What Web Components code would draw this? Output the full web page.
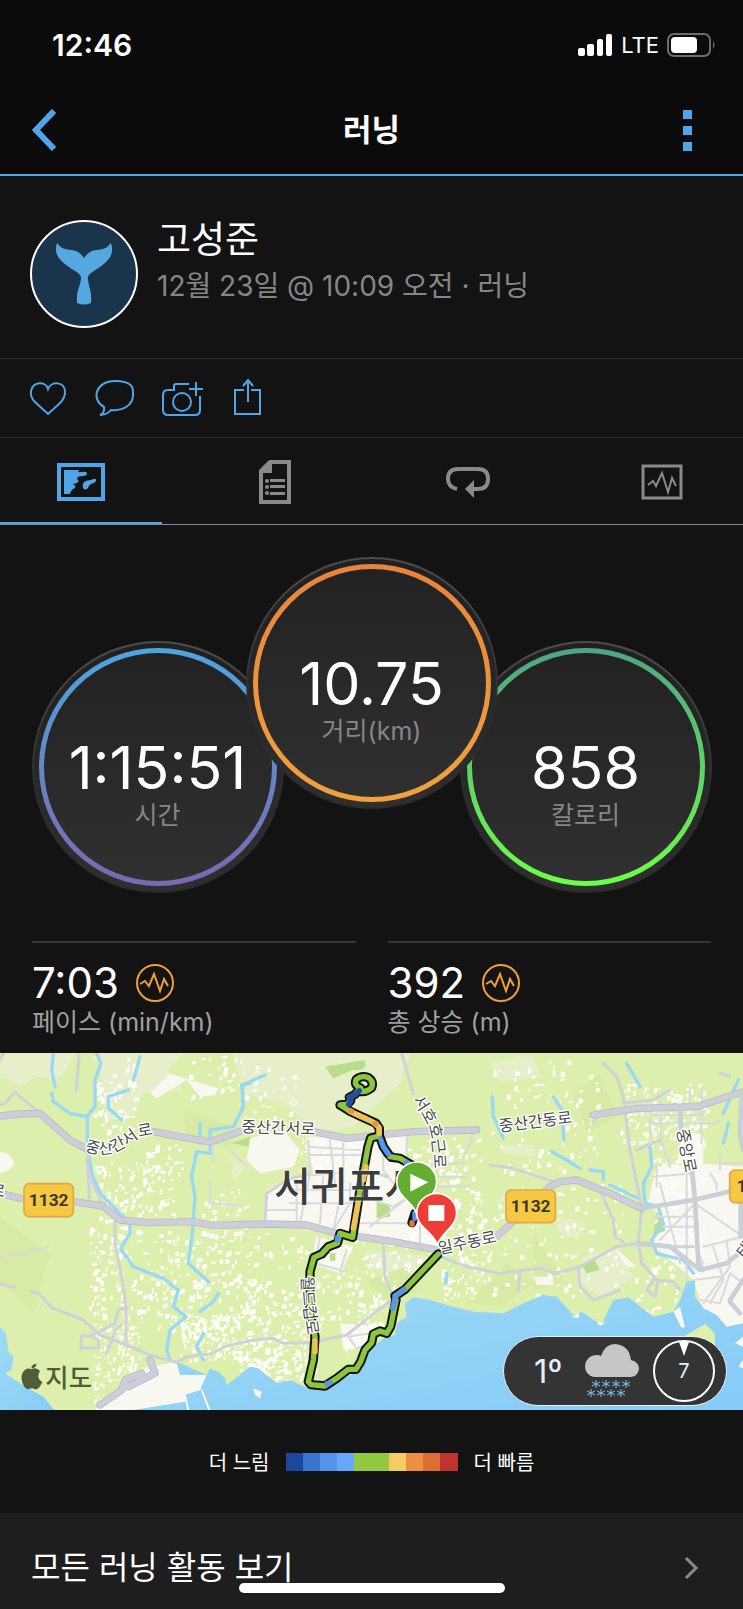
<!DOCTYPE html>
<html lang="ko">
<head>
<meta charset="utf-8">
<meta name="viewport" content="width=device-width, initial-scale=1">
<title>러닝</title>
<style>
    body {
        margin: 0;
        background: #131313;
        color: #fff;
        font-family: Inter, "Noto Sans CJK KR", sans-serif;
        --accent: #4ea5e8;
        --muted: #868686;
        --line: #2e2c2f;
    }
</style>
</head>
<body>
<activity-page></activity-page>

<script>
class StatusBar extends HTMLElement {
    connectedCallback() {
        this.attachShadow({ mode: 'open' });
        this.shadowRoot.innerHTML = `
            <style>
                :host {
                    display: flex;
                    align-items: center;
                    justify-content: space-between;
                    height: 90px;
                    padding: 0 27px 0 52px;
                    background: #0b0b0b;
                }
                time { font-size: 30px; font-weight: 600; }
                .right { display: flex; align-items: center; gap: 8px; font-size: 22px; }
                svg { display: block; }
            </style>
            <time>12:46</time>
            <div class="right">
                <svg width="35" height="22" fill="#fff">
                    <rect y="14" width="7" height="8" rx="2"/><rect x="9" y="10" width="7" height="12" rx="2"/>
                    <rect x="19" y="5" width="6" height="17" rx="2"/><rect x="28" width="6" height="22" rx="2"/>
                </svg>
                <span>LTE</span>
                <svg width="49" height="24">
                    <rect x="1" y="1" width="42" height="22" rx="6" fill="none" stroke="#6d6d6d" stroke-width="2"/>
                    <rect x="4" y="4" width="26" height="16" rx="4" fill="#fff"/>
                    <path d="M46 8q3 4 0 8z" fill="#6d6d6d"/>
                </svg>
            </div>
        `;
    }
}
customElements.define('status-bar', StatusBar);

class NavBar extends HTMLElement {
    connectedCallback() {
        this.attachShadow({ mode: 'open' });
        this.shadowRoot.innerHTML = `
            <style>
                :host {
                    display: grid;
                    grid-template-columns: 80px 1fr 80px;
                    align-items: center;
                    box-sizing: border-box;
                    height: 86px;
                    padding-bottom: 4px;
                    background: #0b0b0b;
                    border-bottom: 2px solid var(--accent);
                }
                h1 { margin: 0; font-size: 31px; font-weight: 700; text-align: center; line-height: 40px; }
                button { border: 0; padding: 0; background: none; height: 60px; }
                .back { padding-left: 31px; text-align: left; }
                .more { padding-right: 51px; text-align: right; }
                svg { display: inline-block; vertical-align: middle; }
            </style>
            <button class="back" aria-label="뒤로"><svg width="26" height="42"><path d="M23 2L5 21l18 19" fill="none" stroke="#4ea5e8" stroke-width="6"/></svg></button>
            <h1><slot></slot></h1>
            <button class="more" aria-label="더 보기"><svg width="9" height="41" fill="#4ea5e8"><path d="M0 0h9v9H0zM0 16h9v9H0zM0 32h9v9H0z"/></svg></button>
        `;
    }
}
customElements.define('nav-bar', NavBar);

class ProfileHeader extends HTMLElement {
    connectedCallback() {
        this.attachShadow({ mode: 'open' });
        this.shadowRoot.innerHTML = `
            <style>
                :host {
                    display: flex;
                    gap: 19px;
                    padding: 44px 30px 30px;
                    border-bottom: 1px solid var(--line);
                }
                .avatar { flex: none; box-sizing: border-box; width: 108px; height: 108px; border: 2px solid #fff; border-radius: 50%; background: #1a344b; }
                svg { display: block; }
                .name { font-size: 37px; line-height: 40px; }
                .when { font-size: 28px; line-height: 52px; color: var(--muted); }
            </style>
            <div class="avatar">
                <svg viewBox="0 0 104 104">
                    <path d="M25 21C31 30 39 26 46 30Q50 33 52 36Q54 33 58 30C65 26 73 30 79 21C84 36 71 43 59 51Q55 54 56 58C57 66 60 69 59 81Q52 84 45 81C44 69 48 65 49 57Q50 54 46 51C34 43 20 36 25 21Z" fill="#55a8df"/>
                </svg>
            </div>
            <div>
                <div class="name"><slot name="name"></slot></div>
                <div class="when"><slot></slot></div>
            </div>
        `;
    }
}
customElements.define('profile-header', ProfileHeader);

class ActionBar extends HTMLElement {
    connectedCallback() {
        this.attachShadow({ mode: 'open' });
        this.shadowRoot.innerHTML = `
            <style>
                :host {
                    display: flex;
                    align-items: center;
                    gap: 27px;
                    height: 78px;
                    padding: 0 28px;
                    border-bottom: 1px solid var(--line);
                }
                button { border: 0; padding: 0; background: none; }
                svg { display: block; fill: none; stroke: #4ea5e8; stroke-width: 2; }
            </style>
            <button aria-label="좋아요"><svg width="40" height="40"><path d="M20 11C23 3 37 3 37 14Q37 20 32 25L20 36L7 24Q2 19 3 13C5 3 18 3 20 11Z"/></svg></button>
            <button aria-label="댓글"><svg width="40" height="40"><path d="M16 32Q12 37 5 37Q10 35 9 29C-4 22 0 3 20 3S38 12 38 17C38 28 27 33 16 32Z"/></svg></button>
            <button aria-label="사진 추가"><svg width="41" height="40"><path d="M27 6H14Q12 6 12 8V12H6Q1 12 1 17V32Q1 37 6 37H33Q38 37 38 32V18M34 4V18M27 11H41"/><circle cx="20" cy="24" r="9"/></svg></button>
            <button aria-label="공유"><svg width="40" height="40"><path d="M14 12H5V36H30V12H21M18 2V24M13 8L18 2l5 6"/></svg></button>
        `;
    }
}
customElements.define('action-bar', ActionBar);

class TabStrip extends HTMLElement {
    connectedCallback() {
        this.attachShadow({ mode: 'open' });
        this.shadowRoot.innerHTML = `
            <style>
                :host {
                    display: grid;
                    grid-template-columns: repeat(4, 1fr);
                    gap: 32px;
                    height: 86px;
                    border-bottom: 1px solid #8a8a8a;
                }
                button {
                    display: flex;
                    align-items: center;
                    justify-content: center;
                    padding: 4px 0 0;
                    border: 0;
                    border-bottom: 2px solid transparent;
                    background: none;
                    color: #8a8a8a;
                }
                .on { color: var(--accent); border-color: var(--accent); }
                svg { display: block; fill: none; stroke: currentColor; }
                .solid { fill: currentColor; stroke: none; }
            </style>
            <button class="on" aria-label="개요">
                <svg width="48" height="38" stroke-width="4"><rect x="2" y="2" width="44" height="34"/>
                    <path class="solid" d="M7 7H22Q20 10 24 9Q29 8 30 10Q30 13 26 13Q20 13 20 16Q23 18 20 20L16 21Q21 24 16 26Q13 28 13 31H7ZM27 19Q30 17 34 17Q40 14 39 18Q38 20 34 21Q31 23 31 25Q28 28 26 25Q25 22 27 19Z"/></svg>
            </button>
            <button aria-label="통계">
                <svg width="34" height="46" stroke-width="4"><path d="M3 12L12 3H31V43H3Z"/>
                    <path class="solid" d="M2 11L11 2H14V14H2ZM12 20H27V23H12ZM12 26H27V29H12ZM12 33H27V36H12Z"/>
                    <g class="solid"><circle cx="9" cy="22" r="2"/><circle cx="9" cy="28" r="2"/><circle cx="9" cy="34" r="2"/></g></svg>
            </button>
            <button aria-label="랩">
                <svg width="46" height="34" stroke-width="4"><path d="M12 24Q3 22 3 14Q3 4 13 4H33Q43 4 43 14Q43 24 33 24H27"/>
                    <path class="solid" d="M20 24L29 15V33Z"/></svg>
            </button>
            <button aria-label="그래프">
                <svg width="42" height="36"><rect x="2" y="2" width="38" height="32" stroke-width="3"/>
                    <path d="M7 21L12 17L15 22L21 9L27 28L31 14L35 22" stroke-width="2"/></svg>
            </button>
        `;
    }
}
customElements.define('tab-strip', TabStrip);

class MetricDial extends HTMLElement {
    connectedCallback() {
        this.attachShadow({ mode: 'open' });
        this.shadowRoot.innerHTML = `
            <style>
                :host {
                    display: block;
                    flex: none;
                    box-sizing: border-box;
                    width: 252px;
                    height: 252px;
                    margin: 0 -19px;
                    padding: 5px;
                    border: 2px solid transparent;
                    border-radius: 50%;
                    background:
                        linear-gradient(#202020, #2f2f2f) padding-box,
                        linear-gradient(#4c4c4c, #2c2c2c 60%) border-box;
                }
                .ring {
                    box-sizing: border-box;
                    height: 100%;
                    padding-top: 85px;
                    border: 5px solid transparent;
                    border-radius: 50%;
                    background:
                        linear-gradient(#222, #303030) padding-box,
                        linear-gradient(var(--from), var(--to)) border-box;
                    text-align: center;
                }
                .value { font-size: 59px; line-height: 60px; white-space: nowrap; }
                .label { font-size: 25px; line-height: 34px; color: var(--muted); }
            </style>
            <div class="ring">
                <div class="value"><slot></slot></div>
                <div class="label">${this.getAttribute('label')}</div>
            </div>
        `;
    }
}
customElements.define('metric-dial', MetricDial);

class StatItem extends HTMLElement {
    connectedCallback() {
        this.attachShadow({ mode: 'open' });
        this.shadowRoot.innerHTML = `
            <style>
                :host { display: block; border-top: 2px solid #383838; padding: 16px 0; }
                .row { display: flex; align-items: center; gap: 17px; font-size: 42px; line-height: 48px; }
                .label { font-size: 25px; line-height: 30px; color: #a0a0a0; }
                svg { display: block; fill: none; stroke: #f0a035; stroke-width: 2; }
            </style>
            <div class="row">
                <span><slot></slot></span>
                <svg width="38" height="38"><circle cx="19" cy="19" r="18"/><path d="M4 20L9 17L13 22L18 10L24 27L28 15L32 22"/></svg>
            </div>
            <div class="label">${this.getAttribute('label')}</div>
        `;
    }
}
customElements.define('stat-item', StatItem);

// built-up areas: x, y, width, height, count, largest block
const AREAS = [
    [280, 20, 130, 220, 60, 14], [560, 15, 170, 130, 26, 12], [270, 330, 260, 180, 110, 11],
    [265, 500, 120, 300, 90, 13], [400, 540, 350, 150, 110, 12], [390, 690, 380, 160, 130, 12],
    [280, 820, 150, 240, 170, 9], [540, 790, 180, 140, 170, 9], [430, 280, 120, 90, 26, 12],
    [720, 860, 230, 130, 170, 11], [720, 680, 200, 180, 90, 11], [930, 660, 270, 170, 90, 11],
    [1210, 260, 240, 330, 150, 12], [1320, 600, 150, 150, 60, 12], [730, 30, 160, 170, 30, 12],
    [1470, 30, 330, 340, 90, 12], [1470, 400, 420, 340, 100, 11], [1860, 100, 260, 190, 170, 9],
    [1960, 320, 150, 310, 260, 8], [760, 540, 500, 120, 70, 12], [1030, 820, 140, 80, 130, 7],
    [900, 260, 220, 130, 150, 7], [600, 380, 150, 170, 30, 10], [1900, 640, 130, 160, 26, 12]
];

class RouteMap extends HTMLElement {
    connectedCallback() {
        this.attachShadow({ mode: 'open' });
        this.shadowRoot.innerHTML = `
            <style>
                :host { display: block; position: relative; overflow: hidden; }
                .map { display: block; width: 100%; height: auto; }
                .map text { font-family: "Noto Sans CJK KR", sans-serif; font-weight: 400; font-size: 48px; fill: #4b4b4b; stroke: #fff; stroke-width: 8px; stroke-linejoin: round; paint-order: stroke; }
                .map .city { font-size: 120px; font-weight: 500; fill: #3d3d3d; stroke-opacity: 0.4; }
                .map .num { font-family: Roboto, sans-serif; font-weight: 700; font-size: 52px; fill: #3f3a2e; stroke: none; text-anchor: middle; }
                .map .brand { font-size: 76px; font-weight: 500; fill: #515c3a; stroke: none; }
                .shield rect { fill: #f6c944; stroke: #e3a548; stroke-width: 5; }
                .line { fill: none; stroke-linejoin: round; stroke-linecap: round; }
                .water { stroke: #9ad9f5; stroke-width: 10; }
                .minor { stroke: #d0d2da; stroke-width: 9; }
                .thin { stroke: #d7dade; stroke-width: 6; }
                .edge { stroke: #b9bbc6; stroke-width: 22; }
                .major { stroke: #cdced9; stroke-width: 17; }
                .case { stroke: #141414; stroke-width: 28; }
                .run { stroke: #8cc63e; stroke-width: 16; }
                .slow { stroke: #5595ea; }
                .slowest { stroke: #1e4da3; }
                .fast { stroke: #efc257; }
                .weather {
                    position: absolute;
                    right: 16px;
                    bottom: 4px;
                    box-sizing: border-box;
                    width: 224px;
                    height: 70px;
                    padding: 0 11px 0 30px;
                    display: flex;
                    align-items: center;
                    justify-content: space-between;
                    border: 1px solid #e5f0f4;
                    border-radius: 35px;
                    background: #343434;
                    color: #e3f2fa;
                    font-size: 33px;
                }
                .weather span { margin-right: 8px; }
                .weather svg { display: block; }
            </style>
            <svg class="map" viewBox="0 9 2229 1071">
                <defs>
                    <linearGradient id="sea" x1="0" y1="0" x2="1" y2="1"><stop offset="0" stop-color="#9edaf5"/><stop offset="1" stop-color="#85cbf7"/></linearGradient>
                    <path id="p1" d="M254 302Q300 320 345 306Q390 285 412 265Q440 252 500 254"/>
                    <path id="p2" d="M1237 150Q1275 205 1290 245Q1303 300 1303 390"/>
                    <path id="p3" d="M905 680Q907 780 930 890"/>
                    <path id="p4" d="M2030 240L2062 400"/>
                    <path id="roads" d="M0 198L60 192L120 190L210 270L265 300M460 245L550 262L630 276L740 237M0 430L60 445L220 455L310 468L360 510L440 518L575 515L640 526L800 522L920 525L1010 550L1180 575L1310 600M940 245L1040 265L1240 245L1430 240M1490 560L1550 505L1650 410L1680 395L1730 390L1830 430L1925 475M1780 195L1910 175L2090 170L2229 125M300 1065L365 1020L375 990L425 970M385 1010L465 970L450 930"/>
                    <path id="route" d="M1082 114Q1060 105 1069 88Q1085 75 1105 83Q1122 95 1115 113Q1095 130 1075 122L1064 134L1048 142L1052 152L1042 163L1020 165L1050 184L1080 198L1128 220L1138 235L1138 258L1112 264L1104 290L1080 420L1058 562L1020 550L1012 580L985 590L965 612L942 622L930 665L930 790L945 860L940 930L925 995L933 1004L975 1008L1010 985L1045 958L1068 958L1082 935L1095 900L1115 878L1120 852L1140 843L1160 850L1172 830L1188 750L1185 738L1215 718L1315 612"/>
                </defs>
                <rect width="2229" height="1089" fill="#dcefac"/>
                <g fill="#e6efca">
                    <path d="M40 0H230L200 60L170 90L110 80L60 110L0 80V20ZM290 0H560L500 60L550 120L430 130L400 200L320 210ZM700 10H1230L1200 100L1060 230L960 250L850 160L730 130Z"/>
                    <path d="M1470 40L1600 15L1620 80L1500 95ZM1500 285H1600V320L1510 310ZM1670 500L1760 520L1730 570L1670 540ZM1750 620L1860 590L1900 680L1800 740L1730 690ZM690 320L740 350L700 390ZM1100 600L1300 620L1270 680L1110 660Z"/>
                </g>
                <g fill="#d8eba5">
                    <path d="M0 500L150 610L100 790L0 690ZM550 180L700 230L690 290L560 260ZM1400 760L1520 640L1600 700L1500 770ZM1720 130L1800 70L1850 200L1760 250ZM1600 550L1700 700L1600 720ZM1100 690L1220 650L1260 720L1160 760Z"/>
                </g>
                <g fill="#b9de8b">
                    <path d="M975 50L1095 30Q1105 65 1060 60L1000 85ZM695 280L750 260V290ZM860 290H880V308H860ZM1745 645L1780 625L1800 660L1760 670ZM1970 490L2030 495V535L1960 555Z"/>
                </g>
                <g fill="#f8f7f0">
                    <path d="M0 305Q40 310 42 345Q20 370 0 370ZM450 130L510 70L570 90L655 115L645 135L600 140L560 90L470 145ZM750 265L850 240L900 300L880 350L780 370L740 330Z"/>
                    <path d="M920 260L1220 255V450L1330 590L1180 570L960 530L790 510L800 420L870 380L940 370ZM950 560L1060 590L1020 670L930 640ZM1020 820L1130 830V890L1030 900Z"/>
                    <path d="M1970 350L2100 340L2229 350V830L2170 830L2110 780L2080 690L2000 620L1960 590L1950 560L2000 540L1980 490L1940 470ZM2050 230L2110 260V340H2030ZM1600 680L1660 680V705L1610 705ZM1840 590L1910 650L1880 650Z"/>
                </g>
                <path d="M990 610H1012V632H990ZM1130 450L1170 470V500L1130 505Z" fill="#b9de8b"/>
                <g class="specks" fill="#fefefb"></g>

                <g class="line water">
                    <path d="M160 10L155 60L165 110M155 130L160 155L210 190L260 200L285 170V90L303 40L290 10M262 200V290L275 370L300 430L390 520V550L362 595L400 650L490 685L535 720L520 770L558 800L510 840L500 900L510 930" />
                    <path d="M420 20L400 90M385 120L325 140L325 175L365 210M750 100L725 105L730 170L700 230L630 240V310L590 305L575 380L585 440L575 570L565 640L625 695M655 730L640 755L600 785M610 850L590 890L610 930M600 220V280"/>
                    <path d="M795 75L728 105V180M1477 140L1480 200L1510 265M1660 140L1685 180L1692 270M1655 305L1700 330L1740 355M1770 360L1810 365V390M1830 405L1915 445M1880 40L1920 110M1950 290L1955 350L1930 400L1935 460L1975 470L1990 520L1955 570L1970 610L2050 630L2080 670M2215 90L2170 190M2185 220L2170 280M1340 670L1338 700"/>
                </g>
                <g fill="url(#sea)">
                    <path d="M0 830L18 850L25 905L40 920L35 960L15 970L60 1000L130 1040L170 1089H0Z"/>
                    <path d="M285 1089L440 950L530 935L620 975L630 955L655 965L675 985L680 1005L700 990L750 950L775 955L830 1000L870 990L925 1015L970 1020L1070 965L1120 890L1150 865L1185 855L1190 820L1220 800L1215 760L1240 742L1290 750L1340 765L1420 785L1510 790L1570 760L1630 735L1670 740L1720 795L1745 785L1805 825L1840 750L1885 742L1960 800L2020 785L2040 750L2060 695L2085 690L2085 740L2110 775L2150 795L2180 830L2229 820V1089Z"/>
                </g>
                <path d="M2050 860L2115 822L2145 850V890L2110 870Z" fill="#dcefac"/>
                <g fill="#f8f7f0">
                    <path d="M285 1080L440 950L530 935L540 975L620 975L600 1020L555 1035V1055L400 1080ZM760 1015L785 1025L780 1045L765 1035ZM1715 800L1738 788L1735 805ZM1790 815L1815 818L1800 828ZM2020 785L2040 770L2055 830L2045 835ZM2229 860L2205 880L2229 890ZM2229 930L2215 950L2229 955Z"/>
                </g>
                <path class="line" d="M555 1035L565 1080M605 1020L630 1085" stroke="#f8f7f0" stroke-width="6"/>

                <g class="line thin">
                    <path d="M0 622L145 593M630 390V460L710 465M690 300L740 350M640 290V340"/>
                    <path d="M925 270L930 370M990 270L1005 400M1030 280V400M930 315H1100M925 290L1080 300M890 390V520M870 420H1080M930 370L900 520M970 380L960 520M1030 400L1000 540M1050 400V460L1000 540M1150 255V360L1180 400M1220 260V330M1090 440L1180 470L1210 450M1080 520H1240M1240 430L1110 530M1260 520V590M870 460H1060M880 380L1010 370M1290 380H1400M1300 410H1410M1420 250L1390 330M1310 340H1390M800 480H890"/>
                    <path d="M960 560L945 640L1040 665M1040 600L1020 665M1045 860L1110 850L1130 870L1070 895Z"/>
                    <path d="M1950 170V270M1980 140L1985 280L2010 350M2070 110V170M2105 110V280M1950 220H2140L2165 210M1950 195H2110M1960 380L2080 370M1970 350V410M2060 350V690M2160 340H2229M2160 310V360M2130 370L2150 400V420M2085 460L1980 570M2085 460L2229 560M1980 400L2040 640M1960 500H2080M1990 530H2080M2110 590L2229 560M2180 570L2190 650L2110 760M2140 590L2170 690L2130 760M2080 690L2160 680M2100 750L2160 760L2190 670L2229 700M2090 600L2110 640"/>
                </g>
                <g class="line minor">
                    <path d="M0 165L15 160L45 127L115 185M0 30L10 12M238 12L229 122M262 320L268 445M265 370L310 470M345 510L345 580L365 680L378 770V885M0 702L42 712M95 725L117 730L155 773L250 810L300 855L380 885L450 915L530 937L560 920L630 912L680 888L750 872L820 865L850 880L930 878L1040 855L1110 800L1180 745M245 858H275L295 870V893L243 895ZM270 858L300 845L345 820L355 778L380 772M365 825L350 835L318 912"/>
                    <path d="M1205 10L1240 130M1150 580L1155 680L1180 745M1320 620L1400 650L1500 670L1620 655L1665 670L1740 650L1850 590L1910 580L2000 590L2080 590M1810 40L1850 80L1870 140L1890 300L1925 470L1915 580L1925 640L1970 690L2020 695L2040 720M1735 650L1740 710L1780 750L1860 720M1960 690L1940 720L1965 740L1975 690M1795 410L1840 510L1845 560L1870 575M1470 345L1540 355L1660 395M1560 670L1555 720M1780 215L1790 200M1870 160L1960 150L2010 120M1910 300L1980 270M2160 70L2190 78M1160 380L1130 370"/>
                    <path d="M795 510L800 430L860 390L930 370"/>
                </g>
                <use href="#roads" class="line edge"/>
                <use href="#roads" class="line major"/>
                <g class="line" stroke="#c9d0d6" stroke-width="14">
                    <path d="M1925 475L2080 450L2229 415M1920 580L2010 590L2100 660L2180 640L2229 600M2040 180L2045 260M2075 350L2085 450L2095 640L2110 660M2225 130L2220 250L2229 300M2222 460V560M2190 750L2229 690M2190 755L2220 790"/>
                </g>

                <use href="#route" class="line case"/>
                <path class="line case" d="M1140 262L1150 290L1165 312L1175 322L1200 325L1235 345M1245 490L1236 518"/>
                <use href="#route" class="line run"/>
                <g class="line run">
                    <path d="M1170 320L1200 325L1225 340"/>
                    <path class="slowest" d="M1078 122L1064 134L1048 142L1052 152L1046 163"/>
                    <path class="fast" d="M1050 184L1080 198L1110 212M1118 216L1137 232V250M1098 350L1090 390M1076 450L1060 535M945 872L945 905"/>
                    <path class="slow" d="M1142 268L1150 290L1165 312M1212 718L1187 738L1178 775M1012 562V570M980 1002L990 997M1245 490V505M1218 338L1235 345"/>
                    <path d="M1236 518V522" stroke="#e77732"/>
                    <path d="M1052 182L1055 184M1125 222L1127 224" stroke="#e99243"/>
                </g>
                <text class="city" x="822" y="452">서귀포시</text>

                <text><textPath href="#p1">중산간서로</textPath></text>
                <text transform="rotate(2 730 245)" x="724" y="247">중산간서로</text>
                <text><textPath href="#p2">서호호근로</textPath></text>
                <text><textPath href="#p3">월드컵로</textPath></text>
                <text><textPath href="#p4">중앙로</textPath></text>
                <text transform="rotate(-7 1500 240)" x="1498" y="245">중산간동로</text>
                <text transform="rotate(-12 1320 610)" x="1318" y="612">일주동로</text>
                <text transform="rotate(8 0 430)" x="-30" y="440">로</text>
                <text transform="rotate(-50 2229 600)" x="2210" y="620">태</text>

                <g class="shield">
                    <rect x="72" y="401" width="148" height="99" rx="16"/><text class="num" x="146" y="469">1132</text>
                    <rect x="1518" y="420" width="148" height="98" rx="16"/><text class="num" x="1592" y="487">1132</text>
                    <rect x="2189" y="360" width="148" height="98" rx="16"/><text class="num" x="2270" y="427">1132</text>
                </g>

                <g stroke="#fff" stroke-width="5">
                    <path d="M1250 492C1240 455 1190 440 1190 396A60 60 0 0 1 1310 396C1310 440 1260 455 1250 492Z" fill="#64ac32"/>
                    <path d="M1312 584C1298 545 1250 530 1250 490A60 60 0 0 1 1370 490C1370 530 1326 545 1312 584Z" fill="#ec3e36"/>
                </g>
                <path d="M1231 371L1285 397L1231 425ZM1285 465H1333V513H1285Z" fill="#fff"/>

                <path d="M120 963Q108 950 94 958Q82 952 72 962Q60 975 67 998Q75 1018 86 1018Q95 1012 104 1018Q117 1020 127 996Q106 985 120 963ZM94 955Q94 943 109 941Q110 953 94 955Z" fill="#515c3a"/>
                <text class="brand" x="136" y="1010">지도</text>
            </svg>
            <div class="weather">
                <span>1º</span>
                <svg width="56" height="56">
                    <path d="M10 34Q1 32 1 23Q2 13 12 12Q16 12 17 13Q21 1 31 1Q45 2 47 17Q55 19 55 26Q54 33 47 34Z" fill="#c6c6c6"/>
                    <g stroke="#7bc3f2" stroke-width="1" fill="none">
                        <path id="flake" d="M12 37V45M8 39L16 43M8 43L16 39"/>
                        <use href="#flake" x="10"/><use href="#flake" x="20"/><use href="#flake" x="30"/>
                        <use href="#flake" x="-5" y="9"/><use href="#flake" x="5" y="9"/><use href="#flake" x="15" y="9"/><use href="#flake" x="25" y="9"/>
                    </g>
                </svg>
                <svg width="62" height="62"><circle cx="31" cy="31" r="30" fill="none" stroke="#fff" stroke-width="2"/><path d="M26 2H36L31 16Z" fill="#fff"/><text x="31" y="38" font-size="20" text-anchor="middle" fill="#e3f2fa">7</text></svg>
            </div>
        `;
        this.drawBuildings();
    }

    drawBuildings() {
        let seed = 11;
        const rnd = () => (seed = (seed * 16807) % 2147483647) / 2147483647;
        let d = '';
        for (const [x, y, w, h, count, size] of AREAS) {
            for (let i = 0; i < count; i++) {
                const bx = Math.round(x + rnd() * w), by = Math.round(y + rnd() * h);
                const bw = Math.round(3 + rnd() * size), bh = Math.round(3 + rnd() * size);
                d += `M${bx} ${by}l${bw} ${Math.round(rnd() * 4 - 2)}l-1 ${bh}l-${bw} 2z`;
            }
        }
        this.shadowRoot.querySelector('.specks').innerHTML = `<path d="${d}"/>`;
    }
}
customElements.define('route-map', RouteMap);

class PaceLegend extends HTMLElement {
    connectedCallback() {
        const colors = ['#1c489b', '#3973cb', '#5594ea', '#6aa6f7', '#93c942', '#93c942', '#f3cc66', '#ea9043', '#db6e30', '#c0332e'];
        this.attachShadow({ mode: 'open' });
        this.shadowRoot.innerHTML = `
            <style>
                :host { display: flex; align-items: center; justify-content: center; gap: 16px; height: 103px; font-size: 20px; }
                .scale { display: flex; width: 172px; height: 18px; }
                i { flex: 1; }
            </style>
            <span><slot name="slow"></slot></span>
            <div class="scale">${colors.map(c => `<i style="background:${c}"></i>`).join('')}</div>
            <span><slot name="fast"></slot></span>
        `;
    }
}
customElements.define('pace-legend', PaceLegend);

class LinkRow extends HTMLElement {
    connectedCallback() {
        this.attachShadow({ mode: 'open' });
        this.shadowRoot.innerHTML = `
            <style>
                :host { display: block; background: #1e1e1e; }
                a { display: flex; align-items: center; justify-content: space-between; padding: 32px 44px 18px 31px; color: #fff; text-decoration: none; font-size: 32px; line-height: 46px; }
                svg { display: block; }
            </style>
            <a href="#"><span><slot></slot></span><svg width="15" height="24"><path d="M2 2L12 12L2 22" fill="none" stroke="#8a8a8a" stroke-width="3"/></svg></a>
        `;
    }
}
customElements.define('link-row', LinkRow);

class HomeIndicator extends HTMLElement {
    connectedCallback() {
        this.attachShadow({ mode: 'open' });
        this.shadowRoot.innerHTML = `
            <style>
                :host { position: fixed; left: 0; right: 0; bottom: 16px; display: flex; justify-content: center; pointer-events: none; }
                div { width: 266px; height: 10px; border-radius: 5px; background: #fff; }
            </style>
            <div></div>
        `;
    }
}
customElements.define('home-indicator', HomeIndicator);

class ActivityPage extends HTMLElement {
    connectedCallback() {
        this.attachShadow({ mode: 'open' });
        this.shadowRoot.innerHTML = `
            <style>
                :host { display: block; }
                .dials { display: flex; align-items: flex-end; justify-content: center; padding: 32px 0 48px; }
                .front { z-index: 1; margin-bottom: 84px; }
                .stats { display: grid; grid-template-columns: 1fr 1fr; gap: 32px; padding: 0 32px; }
                metric-dial.time { --from: #4ea5de; --to: #7a68b0; }
                metric-dial.front { --from: #e8843a; --to: #efa23e; }
                metric-dial.kcal { --from: #4fa583; --to: #6dff48; }
            </style>
            <status-bar></status-bar>
            <nav-bar>러닝</nav-bar>
            <profile-header><span slot="name">고성준</span>12월 23일 @ 10:09 오전 · 러닝</profile-header>
            <action-bar></action-bar>
            <tab-strip></tab-strip>
            <div class="dials">
                <metric-dial class="time" label="시간">1:15:51</metric-dial>
                <metric-dial class="front" label="거리(km)">10.75</metric-dial>
                <metric-dial class="kcal" label="칼로리">858</metric-dial>
            </div>
            <div class="stats">
                <stat-item label="페이스 (min/km)">7:03</stat-item>
                <stat-item label="총 상승 (m)">392</stat-item>
            </div>
            <route-map></route-map>
            <pace-legend><span slot="slow">더 느림</span><span slot="fast">더 빠름</span></pace-legend>
            <link-row>모든 러닝 활동 보기</link-row>
            <home-indicator></home-indicator>
        `;
    }
}
customElements.define('activity-page', ActivityPage);
</script>
</body>
</html>
